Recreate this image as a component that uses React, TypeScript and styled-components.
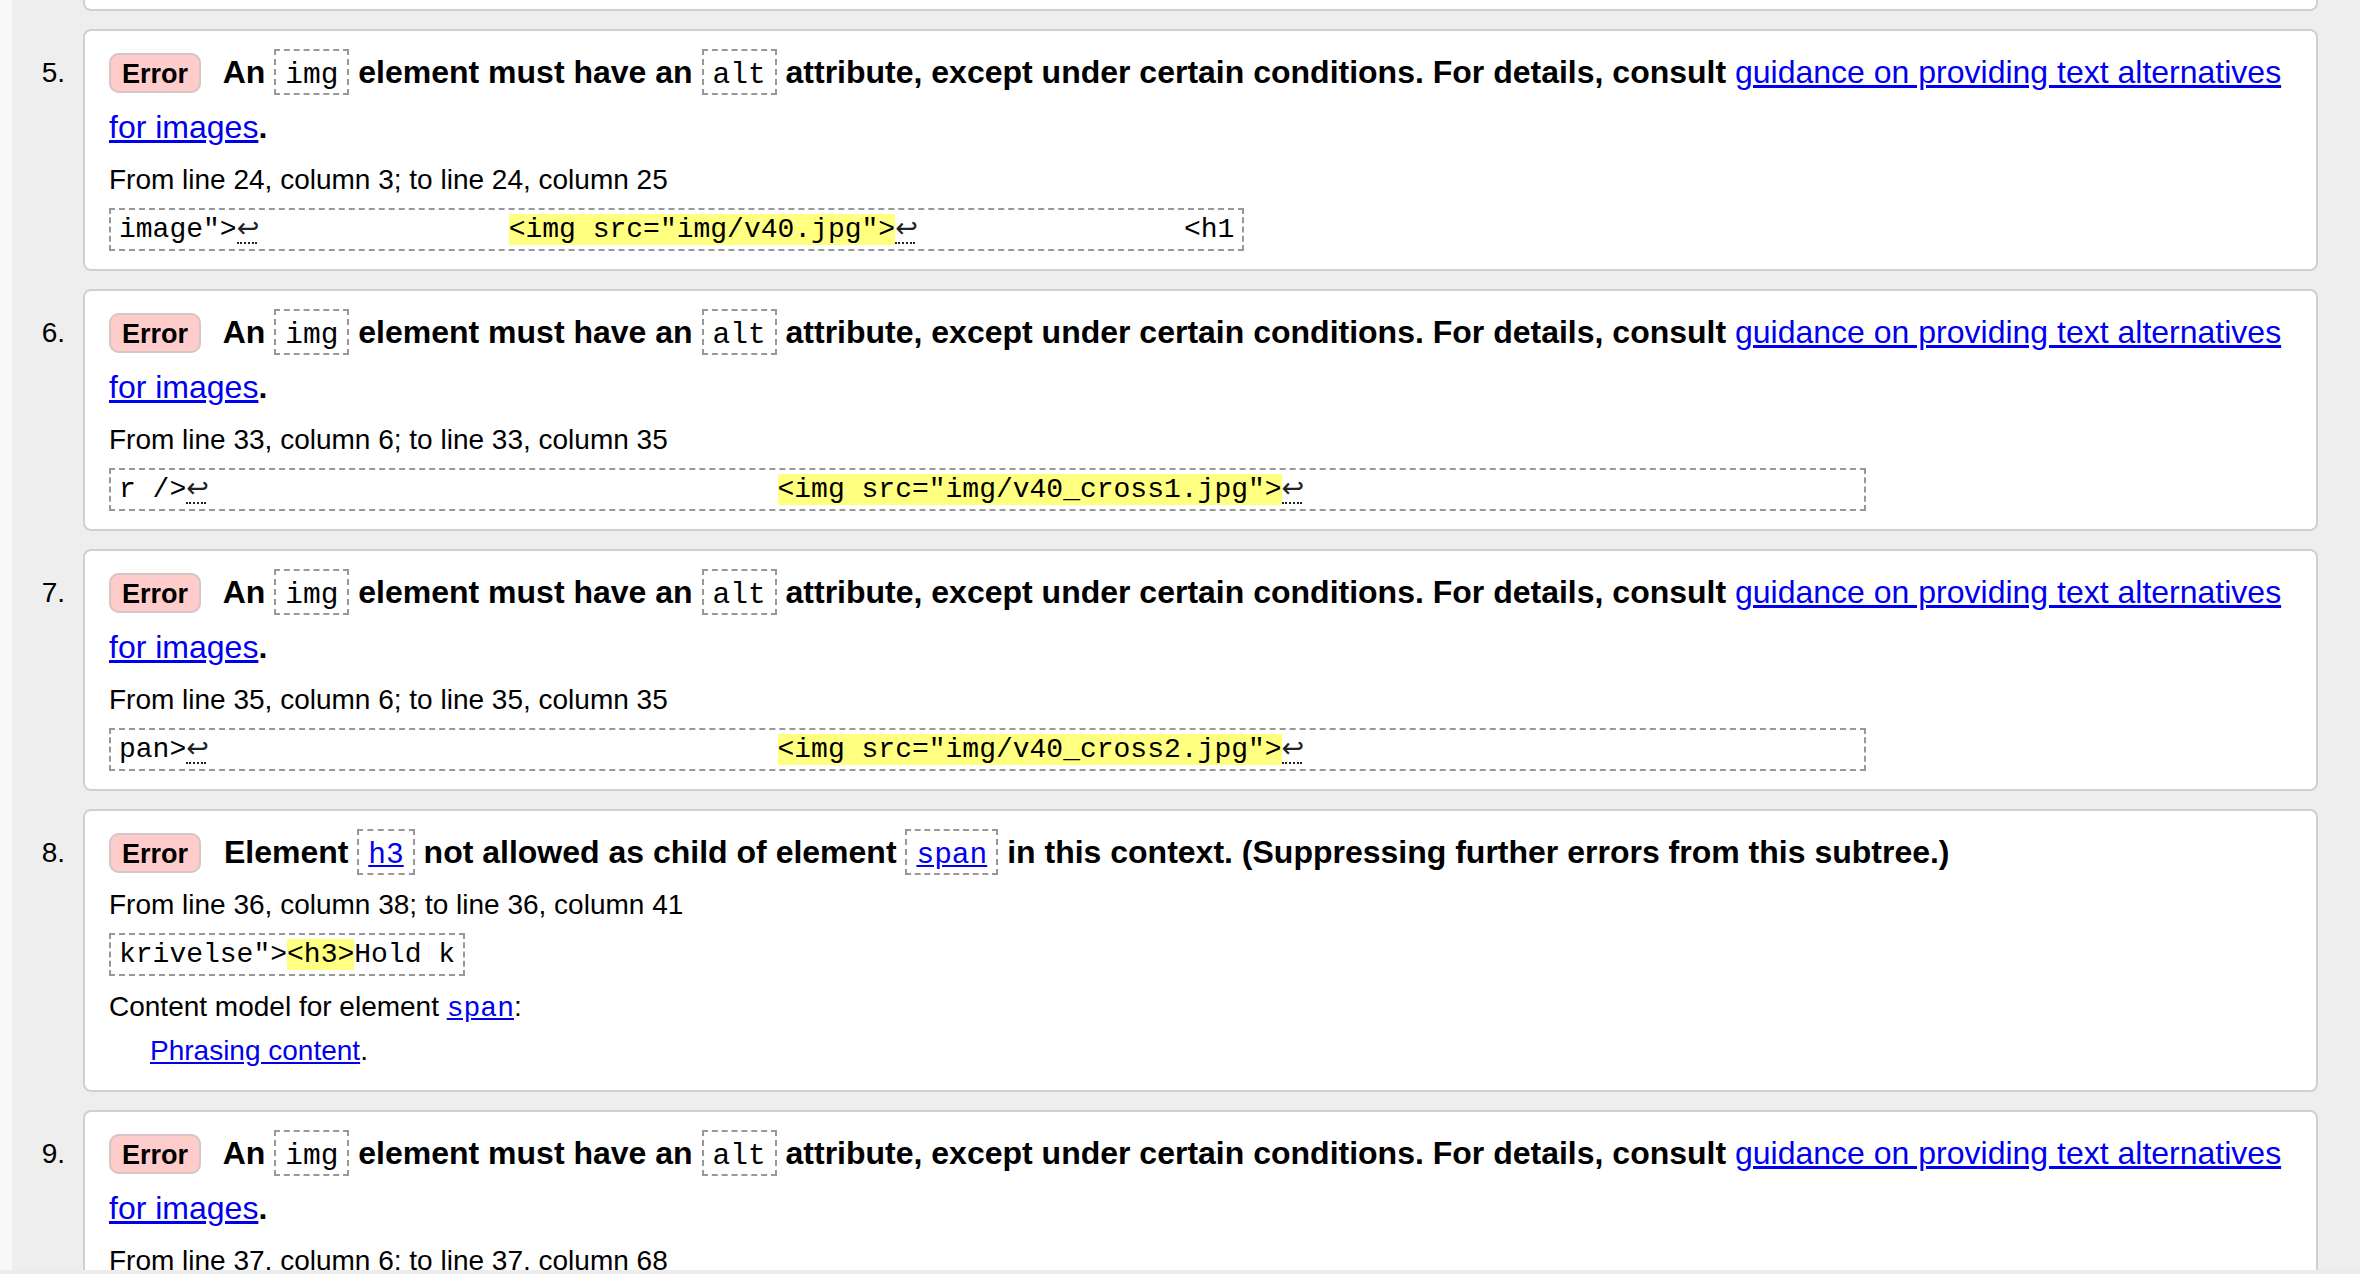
import React from "react";
import styled, { createGlobalStyle } from "styled-components";

const GlobalStyle = createGlobalStyle`
  html, body { margin: 0; padding: 0; background: #eeeeee; }
  body {
    font-family: "Liberation Sans", Arial, Helvetica, sans-serif;
    color: #000;
    overflow: hidden;
  }
`;

const Page = styled.div`
  display: flex;
  min-height: 100vh;
  background: #eeeeee;
`;

const SideEdge = styled.div`
  flex: none;
  width: 12px;
  background: #f9f9f9;
`;

const Main = styled.main`
  flex: 1;
  min-width: 0;
  padding: 0 42px 0 0;
`;

const List = styled.ol`
  list-style: none;
  margin: 0;
  padding: 0;
  display: flex;
  flex-direction: column;
  gap: 18px;
`;

const Item = styled.li`
  display: grid;
  grid-template-columns: 71px 1fr;
`;

const Num = styled.div`
  font-size: 28px;
  line-height: 55px;
  padding: 16px 18px 0 0;
  text-align: right;
`;

const Card = styled.div`
  min-width: 0;
  background: #fff;
  border: 2px solid #d0d0d0;
  border-radius: 8px;
  padding: 14px 12px 18px 24px;
`;

const CardTail = styled.div`
  height: 9px;
  background: #fff;
  border: 2px solid #d0d0d0;
  border-top: none;
  border-radius: 0 0 8px 8px;
`;

const Message = styled.p`
  margin: 0;
  font-size: 32px;
  font-weight: bold;
  line-height: 55px;
`;

const Badge = styled.strong`
  background: #ffcccc;
  border: 2px solid #d6c6c6;
  border-radius: 10px;
  padding: 4px 11px 2px;
  font-size: 27px;
  line-height: 1;
  margin-right: 14px;
`;

const Code = styled.code`
  font-family: "Liberation Mono", "DejaVu Sans Mono", monospace;
  font-weight: normal;
  font-size: 29.5px;
  line-height: 1;
  border: 2px dashed #999;
  padding: 7px 9px 1px;
`;

const Link = styled.a<{ $mono?: boolean }>`
  color: #0000ee;
  text-decoration: underline;
  font-weight: normal;
  ${(p) =>
    p.$mono
      ? `font-family: "Liberation Mono", "DejaVu Sans Mono", monospace;`
      : ""}
`;

const TextLine = styled.p<{ $gap?: number }>`
  margin: ${(p) => p.$gap ?? 4}px 0 0;
  font-size: 28px;
  line-height: 42px;
`;

const Indented = styled.div`
  padding-left: 41px;
  font-size: 28px;
  line-height: 42px;
`;

const ExtractRow = styled.div`
  display: flex;
  margin-top: 7px;
`;

const Snippet = styled.code`
  display: block;
  font-family: "Liberation Mono", "DejaVu Sans Mono", monospace;
  font-size: 28px;
  line-height: 35px;
  white-space: pre;
  border: 2px dashed #999;
  padding: 2px 8px;
`;

const Mark = styled.b`
  font-weight: normal;
  background: #ffff80;
`;

const Lf = styled.span`
  display: inline-block;
  width: 20px;
  line-height: 28px;
  text-align: left;
  border-bottom: 2px dotted #222;
  font-family: "DejaVu Sans", "DejaVu Sans Mono", sans-serif;
  font-size: 27px;
  color: #222;
  white-space: nowrap;
`;

const BottomEdge = styled.div`
  position: fixed;
  left: 0;
  right: 0;
  bottom: 0;
  height: 4px;
  background: #ececec;
`;

const sp = (n: number) => " ".repeat(n);

type ImgError = {
  n: number;
  from: string;
  before: string;
  lead: number;
  mark: string;
  trail: number;
  after?: string;
};

const imgErrors: Record<number, ImgError> = {
  5: {
    n: 5,
    from: "From line 24, column 3; to line 24, column 25",
    before: 'image">',
    lead: 15,
    mark: '<img src="img/v40.jpg">',
    trail: 16,
    after: "<h1",
  },
  6: {
    n: 6,
    from: "From line 33, column 6; to line 33, column 35",
    before: "r />",
    lead: 34,
    mark: '<img src="img/v40_cross1.jpg">',
    trail: 33,
  },
  7: {
    n: 7,
    from: "From line 35, column 6; to line 35, column 35",
    before: "pan>",
    lead: 34,
    mark: '<img src="img/v40_cross2.jpg">',
    trail: 33,
  },
  9: {
    n: 9,
    from: "From line 37, column 6; to line 37, column 68",
    before: "an>",
    lead: 20,
    mark: '<img src="img/v40_logo.png" width="120" height="40">',
    trail: 4,
  },
};

function AltMessage() {
  return (
    <Message>
      <Badge>Error</Badge> An <Code>img</Code> element must have an{" "}
      <Code>alt</Code> attribute, except under certain conditions. For details,
      consult{" "}
      <Link href="#alt">
        guidance on providing text alternatives
        <br />
        for images
      </Link>
      .
    </Message>
  );
}

function ImgItem({ e }: { e: ImgError }) {
  return (
    <Item>
      <Num>{e.n}.</Num>
      <Card>
        <AltMessage />
        <TextLine>{e.from}</TextLine>
        <ExtractRow>
          <Snippet>
            {e.before}
            <Lf>↩</Lf>
            {sp(e.lead)}
            <Mark>{e.mark}</Mark>
            <Lf>↩</Lf>
            {sp(e.trail)}
            {e.after ?? ""}
          </Snippet>
        </ExtractRow>
      </Card>
    </Item>
  );
}

export default function App() {
  return (
    <>
      <GlobalStyle />
      <Page>
        <SideEdge />
        <Main>
          <List>
            <Item>
              <span />
              <CardTail />
            </Item>
            <ImgItem e={imgErrors[5]} />
            <ImgItem e={imgErrors[6]} />
            <ImgItem e={imgErrors[7]} />
            <Item>
              <Num>8.</Num>
              <Card>
                <Message>
                  <Badge>Error</Badge> Element{" "}
                  <Code>
                    <Link href="#h3" $mono>
                      h3
                    </Link>
                  </Code>{" "}
                  not allowed as child of element{" "}
                  <Code>
                    <Link href="#span" $mono>
                      span
                    </Link>
                  </Code>{" "}
                  in this context. (Suppressing further errors from this
                  subtree.)
                </Message>
                <TextLine>From line 36, column 38; to line 36, column 41</TextLine>
                <ExtractRow>
                  <Snippet>
                    {'krivelse">'}
                    <Mark>{"<h3>"}</Mark>
                    {"Hold k"}
                  </Snippet>
                </ExtractRow>
                <TextLine $gap={10}>
                  Content model for element{" "}
                  <Link href="#span-model" $mono>
                    span
                  </Link>
                  :
                </TextLine>
                <Indented>
                  <Link href="#phrasing">Phrasing content</Link>.
                </Indented>
              </Card>
            </Item>
            <ImgItem e={imgErrors[9]} />
          </List>
        </Main>
      </Page>
      <BottomEdge />
    </>
  );
}
